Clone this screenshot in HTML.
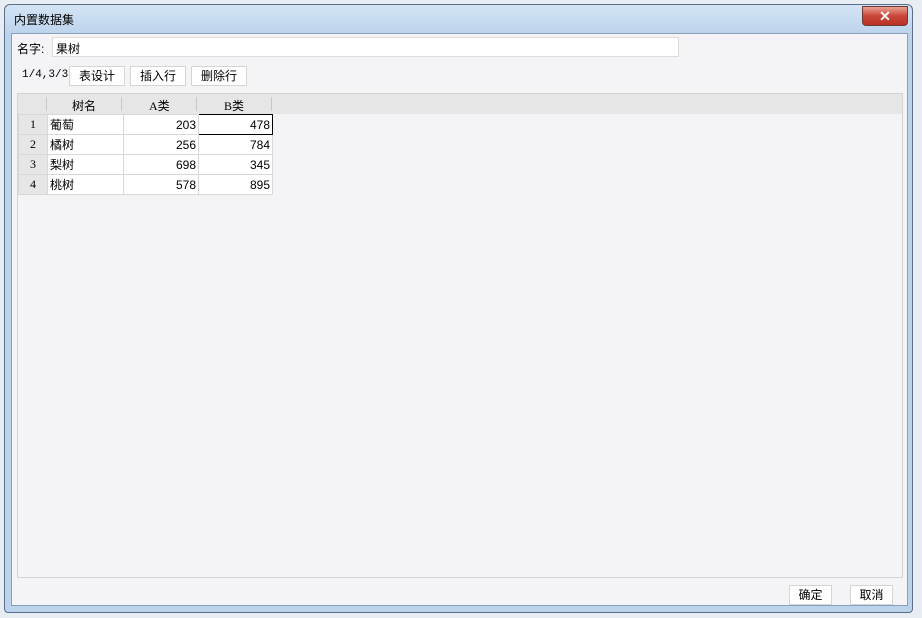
<!DOCTYPE html>
<html><head><meta charset="utf-8"><style>
*{margin:0;padding:0;box-sizing:border-box}
body{width:922px;height:618px;background:#e8edf3;font-family:"Liberation Sans","Noto Sans CJK SC",sans-serif;font-size:12px;color:#000;position:relative;overflow:hidden}
.win{position:absolute;left:4px;top:4px;width:909px;height:609px;border:1px solid #5a6f8a;border-radius:6px 6px 4px 4px;background:linear-gradient(180deg,#d3e4f5 0,#bcd3ec 30px,#bcd3ec 100%)}
.title{position:absolute;left:9px;top:6px;font-size:12px}
.close{position:absolute;left:857px;top:1px;width:46px;height:20px;border:1px solid #6d3a35;border-radius:0 0 4px 4px;background:linear-gradient(#e8a293,#c9473a 50%,#b93125);color:#fff;font-weight:bold;text-align:center;line-height:18px;font-size:14px}
.client{position:absolute;left:6px;top:28px;width:897px;height:573px;background:#f4f4f6;border:1px solid #8aa0ba}
.abs{position:absolute}
.inp{left:40px;top:3px;width:627px;height:20px;background:#fff;border:1px solid #dcdcdc;padding:2px 3px}
.btn{height:20px;background:#fff;border:1px solid #d5d5d5;text-align:center;line-height:18px}
.grid{left:5px;top:59px;width:886px;height:485px;border:1px solid #d3d3d3;background:#f4f4f6}
table{border-collapse:collapse;position:absolute;left:0;top:0}
td{height:20px;border:1px solid #d8d8d8;background:#fff;padding:0 2px;font-size:12px}
td.n{background:#e6e6e6;text-align:center;font-family:"Liberation Serif",serif;width:29px}
td.r{text-align:right}
.hdr{position:absolute;left:0;top:0;width:884px;height:20px;background:#e6e6e6}
.hdr span{position:absolute;top:3px}
.sep{position:absolute;top:3px;width:1px;height:14px;background:#c8c8c8}
</style></head><body>
<div class="win">
<div class="title">内置数据集</div>
<div class="close">✕</div>
<div class="client">
<div class="abs" style="left:5px;top:6px">名字:</div>
<div class="abs inp">果树</div>
<div class="abs" style="left:10px;top:35px;font-family:'Liberation Mono',monospace;font-size:11px">1/4,3/3</div>
<div class="abs btn" style="left:57px;top:32px;width:56px">表设计</div>
<div class="abs btn" style="left:118px;top:32px;width:56px">插入行</div>
<div class="abs btn" style="left:179px;top:32px;width:56px">删除行</div>
<div class="abs grid">
<div class="hdr"><div class="sep" style="left:28px"></div><span style="left:54px">树名</span><div class="sep" style="left:103px"></div><span style="left:131px;font-family:'Liberation Serif',serif">A类</span><div class="sep" style="left:178px"></div><span style="left:206px;font-family:'Liberation Serif',serif">B类</span><div class="sep" style="left:253px"></div></div>
<table style="top:20px">
<tr><td class="n" style="width:28px">1</td><td style="width:76px">葡萄</td><td class="r" style="width:75px">203</td><td class="r" style="width:74px;border:1px solid #000">478</td></tr>
<tr><td class="n">2</td><td>橘树</td><td class="r">256</td><td class="r">784</td></tr>
<tr><td class="n">3</td><td>梨树</td><td class="r">698</td><td class="r">345</td></tr>
<tr><td class="n">4</td><td>桃树</td><td class="r">578</td><td class="r">895</td></tr>
</table>
</div>
<div class="abs btn" style="left:777px;top:551px;width:43px">确定</div>
<div class="abs btn" style="left:838px;top:551px;width:43px">取消</div>
</div>
</div>
</body></html>
